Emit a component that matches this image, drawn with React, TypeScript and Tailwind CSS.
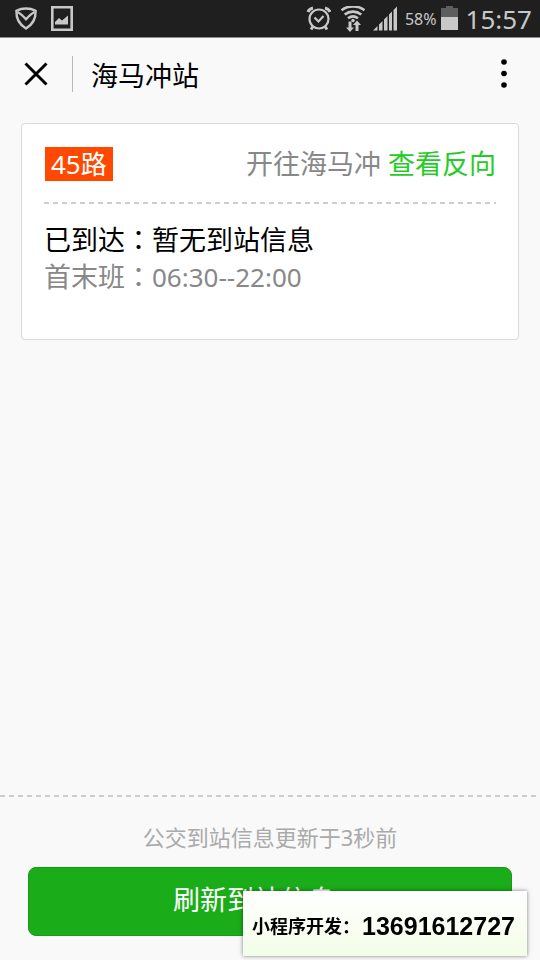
import type { ReactNode } from "react";

const dashedLine =
  "h-[2px] bg-[repeating-linear-gradient(90deg,#cdcdcd_0_5px,transparent_5px_9px)]";

function StatusIcon({ width, children }: { width: number; children: ReactNode }) {
  return (
    <svg
      width={width}
      height="26"
      viewBox={`0 0 ${width} 26`}
      fill="none"
      stroke="#c8c8c8"
      strokeWidth="2"
      aria-hidden="true"
    >
      {children}
    </svg>
  );
}

function StatusBar() {
  return (
    <div className="flex h-[38px] items-center justify-between border-b border-[#8c8c8c] bg-[#1f1f1f] pl-[14px] pr-2 text-[#c8c8c8]">
      <div className="flex items-center gap-3">
        <StatusIcon width={24}>
          <path d="M12 2.500c3.600 0 6.800.8 9.600 2.300C21.900 12.500 18.800 18.500 12 22.500 5.200 18.500 2.100 12.500 2.400 4.800 5.200 3.300 8.400 2.500 12 2.500Z" strokeWidth="2.400" />
          <path d="M3.500 6c3 1.500 5.500 4 8.500 7.300 3-3.300 5.500-5.800 8.500-7.300" strokeWidth="2.400" />
        </StatusIcon>
        <StatusIcon width={24}>
          <path d="M2.300 1.300h19.400v22.400H2.300z" strokeWidth="2.600" />
          <path d="M5 18.500v-2.500l4-4 3 2.500 6-5v9z" fill="#c8c8c8" stroke="none" />
        </StatusIcon>
      </div>
      <div className="flex items-center">
        <div className="flex items-center gap-2">
          <StatusIcon width={26}>
            <circle cx="14" cy="13" r="9.500" strokeWidth="2.200" />
            <path d="M9.500 11.500l4 4 5-5.500" strokeWidth="2.200" />
            <path d="M3 6c1-2.500 2.500-3.500 5-4M25 6c-1-2.500-2.500-3.500-5-4" strokeWidth="3" />
            <path d="M8 20.500l-2 3M20 20.500l2 3" strokeWidth="3" />
          </StatusIcon>
          <StatusIcon width={26}>
            <path d="M2.500 4.200c6.500-5 16.500-5 23 0M5.700 8.500c4.800-3.800 11.800-3.800 16.600 0M9 12.300c3-2.300 7-2.300 10 0" strokeWidth="2.600" />
            <circle cx="14" cy="14.500" r="1.700" fill="#c8c8c8" stroke="none" />
            <path d="M9.500 15.500h3v6h2.500l-4 4.500-4-4.500h2.500zM16.500 25v-6H14l4-4.500 4 4.500h-2.500v6z" fill="#c8c8c8" stroke="none" />
          </StatusIcon>
          <StatusIcon width={24}>
            <path
              d="M0 24.500l4.500-4.500v4.500zM6 24.500v-6l3.500-3.500v9.500zM11 24.500V13.500l3.500-3.500v14.500zM16 24.500V8.500l3-3v19zM20.500 24.500V4L24 .500v24z"
              fill="#c8c8c8"
              stroke="none"
            />
          </StatusIcon>
        </div>
        <span className="ml-2 text-[16px] leading-5">58%</span>
        <span className="ml-1">
          <StatusIcon width={17}>
            <path d="M0 2h5V0h7v2h5v10H0z" fill="#5e5e5e" stroke="none" />
            <path d="M0 11h17v13H0z" fill="#c8c8c8" stroke="none" />
          </StatusIcon>
        </span>
        <time className="ml-2 text-[26px] leading-8">15:57</time>
      </div>
    </div>
  );
}

function Header() {
  return (
    <header className="flex h-[72px] items-center px-[22px]">
      <button type="button" aria-label="关闭" className="p-[2px]">
        <svg width="24" height="24" viewBox="0 0 24 24" stroke="#000" strokeWidth="3">
          <path d="M1.500 1.500l21 21M22.500 1.500l-21 21" />
        </svg>
      </button>
      <div className="ml-[22px] h-9 w-px bg-[#b8b8b8]" />
      <h1 className="ml-[18px] pt-1 text-[27px] leading-9">海马冲站</h1>
      <button type="button" aria-label="更多" className="ml-auto">
        <svg width="28" height="32" viewBox="0 0 28 32">
          <circle cx="14" cy="4" r="2.800" />
          <circle cx="14" cy="15.500" r="2.800" />
          <circle cx="14" cy="27" r="2.800" />
        </svg>
      </button>
    </header>
  );
}

function Colon() {
  return <span className="font-['Noto_Sans_CJK_TC',sans-serif]">：</span>;
}

function RouteCard() {
  return (
    <section className="mx-[21px] mt-[13px] rounded border border-[#dadada] bg-white px-[22px] pb-11 pt-[23px] text-[27px] leading-9">
      <div className="flex items-center justify-between">
        <h2 className="ml-px bg-[#ff4800] px-[6px] text-[26px] leading-[34px] text-white">
          45路
        </h2>
        <p className="leading-[34px] text-[#888]">
          开往海马冲{" "}
          <a href="#reverse" className="text-[#26cc26]">
            查看反向
          </a>
        </p>
      </div>
      <div className={`mt-[21px] ${dashedLine}`} />
      <p className="mt-[17px]">
        已到达
        <Colon />
        暂无到站信息
      </p>
      <p className="text-[#888]">
        首末班
        <Colon />
        <span className="text-[26px]">06:30--22:00</span>
      </p>
    </section>
  );
}

function Footer() {
  return (
    <footer className="mt-auto pb-6">
      <div className={dashedLine} />
      <p className="mt-[22px] text-center text-[22px] leading-9 text-[#aaa]">
        公交到站信息更新于3秒前
      </p>
      <div className="mt-3 px-7">
        <button
          type="button"
          className="h-[69px] w-full rounded-lg border border-[#189a18] bg-[#1aad19] pb-1 pr-8 text-[27px] leading-9 text-white"
        >
          刷新到站信息
        </button>
      </div>
    </footer>
  );
}

function ContactBanner() {
  return (
    <aside className="fixed bottom-1 right-[13px] flex h-[65px] items-center bg-linear-to-b from-white to-[#f2fde8] pl-[9px] pr-3 pt-1 font-bold shadow-[0_0_4px_rgba(0,0,0,0.5)]">
      <span className="w-[110px] whitespace-nowrap text-[18px] leading-7">小程序开发：</span>
      <span className="font-['Liberation_Sans',sans-serif] text-[25px] leading-7">
        13691612727
      </span>
    </aside>
  );
}

export default function App() {
  return (
    <div className="flex min-h-screen flex-col bg-[#f9f9f9] font-['Noto_Sans','Noto_Sans_CJK_SC',sans-serif] text-black">
      <StatusBar />
      <Header />
      <RouteCard />
      <Footer />
      <ContactBanner />
    </div>
  );
}
